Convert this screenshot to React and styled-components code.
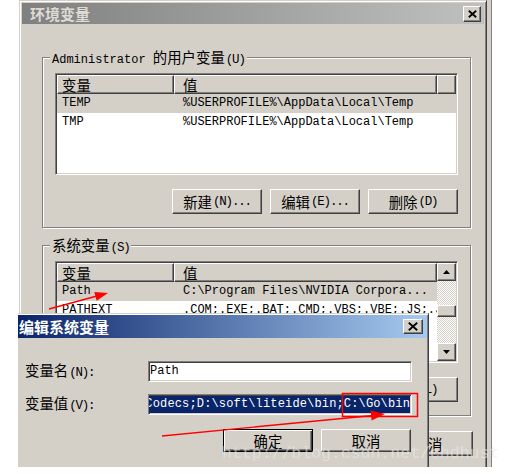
import React from 'react';
import styled, { createGlobalStyle, css } from 'styled-components';

const FACE = '#d4d0c8';
const SHADOW = '#808080';
const DARK = '#404040';

const Global = createGlobalStyle`
  html, body { margin: 0; padding: 0; background: #fff; }
  body { font-family: "Liberation Mono", "Noto Sans CJK SC", monospace; font-size: 12px; color: #000; }
  * { box-sizing: border-box; }
`;

const Han = styled.span`
  font-family: "Noto Sans CJK SC", sans-serif;
  font-size: ${p => p.$size || 14.4}px;
`;
const Lat = styled.span`
  font-family: "Liberation Mono", monospace;
  font-size: 12px;
`;
const Mn = styled.span`
  font-family: "Liberation Mono", monospace;
  font-size: 12.5px;
  letter-spacing: -1.2px;
  margin-left: 1px;
`;

const raised = css`
  background: ${FACE};
  border: 1px solid;
  border-color: #fff ${DARK} ${DARK} #fff;
  box-shadow: inset -1px -1px ${SHADOW}, inset 1px 1px ${FACE};
`;
const sunken = css`
  border: 1px solid;
  border-color: ${SHADOW} #fff #fff ${SHADOW};
  box-shadow: inset 1px 1px ${DARK}, inset -1px -1px ${FACE};
`;

const Desktop = styled.div`
  position: relative;
  width: 512px;
  height: 474px;
  overflow: hidden;
  background: #fff;
`;

const Crop = styled.div`
  position: absolute;
  left: 18px;
  top: 0;
  width: 494px;
  height: 467px;
  overflow: hidden;
`;

const MainWindow = styled.div`
  position: absolute;
  left: 1px;
  top: 0;
  width: 468px;
  height: 490px;
  background: ${FACE};
  border: 1px solid;
  border-color: ${FACE} ${DARK} ${DARK} ${FACE};
  box-shadow: inset 1px 1px #fff, inset -1px -1px ${SHADOW}, 4px 0 0 ${FACE}, 5px 0 0 ${SHADOW};
  padding: 2px;
  display: flex;
  flex-direction: column;
`;

const EditWindow = styled.div`
  position: absolute;
  left: 0;
  top: 313px;
  width: 411px;
  height: 180px;
  background: ${FACE};
  border: 1px solid;
  border-left: none;
  border-color: ${FACE} ${DARK} ${DARK};
  box-shadow: inset 0 1px #fff, inset -1px -1px ${SHADOW};
  padding: 1px 1px 1px 0;
  display: flex;
  flex-direction: column;
`;

const TitleBar = styled.div`
  flex: none;
  height: ${p => p.$h}px;
  display: flex;
  align-items: center;
  justify-content: space-between;
  padding: 0 ${p => p.$pr}px 0 ${p => p.$pl}px;
  background: ${p => (p.$active
    ? 'linear-gradient(to right, #0a246a, #a6caf0)'
    : 'linear-gradient(to right, #808080, #c0c0c0)')};
  color: ${p => (p.$active ? '#fff' : '#dedad4')};
  font-family: "Noto Sans CJK SC", sans-serif;
  font-weight: bold;
  font-size: 15px;
  line-height: 1;
  white-space: nowrap;
`;

const CloseButton = styled.div`
  ${raised};
  width: ${p => p.$w}px;
  height: ${p => p.$h}px;
  display: flex;
  align-items: center;
  justify-content: center;
`;

const XGlyph = ({ w, h }) => (
  <svg width={w} height={h} viewBox={`0 0 ${w} ${h}`}>
    <path d={`M0.8 0.8 L${w - 0.8} ${h - 0.8} M${w - 0.8} 0.8 L0.8 ${h - 0.8}`} stroke="#000" strokeWidth="1.8" fill="none" />
  </svg>
);

const MainBody = styled.div`
  display: flex;
  flex-direction: column;
  padding: 25px 13px 0 20px;
`;

const Group = styled.fieldset`
  margin: 0;
  margin-top: ${p => p.$mt || 0}px;
  min-width: 0;
  border: 1px solid ${SHADOW};
  box-shadow: inset 1px 1px #fff, 1px 1px #fff;
  padding: 8px 12px 13px;
`;

const Legend = styled.legend`
  padding: 0 2px;
  margin-left: -5px;
  height: 16px;
  line-height: 16px;
  background: ${FACE};
  white-space: nowrap;
`;

const ListView = styled.div`
  height: 102px;
  ${sunken};
  background: #fff;
  padding: 1px;
  display: grid;
  grid-template-columns: ${p => (p.$scroll ? '1fr 19px' : '1fr')};
  overflow: hidden;
`;

const ListPane = styled.div`
  display: flex;
  flex-direction: column;
  min-width: 0;
  overflow: hidden;
`;

const Row = styled.div`
  flex: none;
  display: grid;
  grid-template-columns: 117px 263px 1fr;
  height: 19px;
  line-height: 19px;
  white-space: nowrap;
  background: ${p => (p.$selected ? FACE : 'transparent')};
`;

const HeaderCell = styled.div`
  ${raised};
  padding-left: ${p => p.$pl}px;
  line-height: 17px;
  overflow: hidden;
`;

const Cell = styled.div`
  padding-left: ${p => p.$pl}px;
  overflow: hidden;
  font-family: "Liberation Mono", monospace;
  font-size: 12px;
`;

const ScrollBar = styled.div`
  display: flex;
  flex-direction: column;
  background: repeating-conic-gradient(#fff 0 25%, ${FACE} 0 50%) 0 0 / 2px 2px;
`;

const ScrollBtn = styled.div`
  ${raised};
  flex: none;
  height: 18px;
  display: flex;
  align-items: center;
  justify-content: center;
  margin-top: ${p => (p.$bottom ? 'auto' : '0')};
`;

const Thumb = styled.div`
  ${raised};
  flex: none;
  height: 12px;
  margin-top: 24px;
`;

const Tri = ({ down }) => (
  <svg width="7" height="4" viewBox="0 0 7 4">
    <polygon points={down ? '0,0 7,0 3.5,4' : '0,4 7,4 3.5,0'} fill="#000" />
  </svg>
);

const ButtonRow = styled.div`
  display: flex;
  justify-content: flex-end;
  gap: 8px;
  margin-top: ${p => p.$mt}px;
  margin-right: ${p => p.$mr || 0}px;
`;

const Button = styled.div`
  ${raised};
  width: 90px;
  height: ${p => p.$h || 25}px;
  display: flex;
  align-items: center;
  justify-content: center;
  line-height: 16px;
  white-space: nowrap;
  ${p => p.$default && css`
    border-color: #000;
    box-shadow: inset 1px 1px #fff, inset -1px -1px ${DARK}, inset -2px -2px ${SHADOW};
  `}
`;

const EditBody = styled.div`
  display: flex;
  flex-direction: column;
  padding: 23px 15px 0 7px;
`;

const FieldGrid = styled.div`
  display: grid;
  grid-template-columns: 123px 264px;
  row-gap: 12px;
  align-items: center;
`;

const FieldLabel = styled.div`
  white-space: nowrap;
  line-height: 16px;
`;

const TextInput = styled.div`
  height: 21px;
  ${sunken};
  background: #fff;
  padding: 1px ${p => (p.$end ? 1 : 2)}px 1px 1px;
  display: flex;
  align-items: center;
  justify-content: ${p => (p.$end ? 'flex-end' : 'flex-start')};
  overflow: hidden;
  white-space: nowrap;
  font-family: "Liberation Mono", monospace;
  font-size: 12px;
  line-height: 15px;
`;

const Selection = styled.span`
  flex: none;
  background: #0a246a;
  color: #fff;
  padding: 1px 0;
  letter-spacing: 0.15px;
`;

const Overlay = styled.svg`
  position: absolute;
  left: 0;
  top: 0;
  pointer-events: none;
`;

const Watermark = styled.div`
  position: absolute;
  left: 222px;
  top: 444px;
  font-family: "Liberation Mono", monospace;
  font-size: 16.5px;
  color: rgba(238, 236, 232, 0.6);
  -webkit-text-stroke: 0.2px rgba(170, 170, 170, 0.25);
  white-space: nowrap;
  pointer-events: none;
`;

const listHeader = (
  <Row>
    <HeaderCell $pl={4}><Han>变量</Han></HeaderCell>
    <HeaderCell $pl={8}><Han>值</Han></HeaderCell>
    <HeaderCell $pl={0} />
  </Row>
);

const userVars = [
  ['TEMP', '%USERPROFILE%\\AppData\\Local\\Temp', true],
  ['TMP', '%USERPROFILE%\\AppData\\Local\\Temp', false],
];

const sysVars = [
  ['Path', 'C:\\Program Files\\NVIDIA Corpora...', true],
  ['PATHEXT', '.COM;.EXE;.BAT;.CMD;.VBS;.VBE;.JS;.JSE;.WSF;.WSH', false],
  ['PROCESSOR_ARCHITECTURE', 'AMD64', false],
  ['PROCESSOR_IDENTIFIER', 'Intel64 Family 6 Model 58', false],
];

const VarRows = ({ rows }) =>
  rows.map(([k, v, sel]) => (
    <Row key={k} $selected={sel}>
      <Cell $pl={5}>{k}</Cell>
      <Cell $pl={9}>{v}</Cell>
      <Cell $pl={0} />
    </Row>
  ));

export default function App() {
  return (
    <>
      <Global />
      <Desktop>
        <Crop>
          <MainWindow>
            <TitleBar $h={21} $pl={8} $pr={3}>
              <span>环境变量</span>
              <CloseButton $w={18} $h={16}><XGlyph w={9} h={8} /></CloseButton>
            </TitleBar>
            <MainBody>
              <Group>
                <Legend><Lat>Administrator </Lat><Han>的用户变量</Han><Mn>(U)</Mn></Legend>
                <ListView>
                  <ListPane>
                    {listHeader}
                    <VarRows rows={userVars} />
                  </ListPane>
                </ListView>
                <ButtonRow $mt={14}>
                  <Button><Han>新建</Han><Mn>(N)...</Mn></Button>
                  <Button><Han>编辑</Han><Mn>(E)...</Mn></Button>
                  <Button><Han>删除</Han><Mn>(D)</Mn></Button>
                </ButtonRow>
              </Group>
              <Group $mt={9}>
                <Legend><Han>系统变量</Han><Mn>(S)</Mn></Legend>
                <ListView $scroll>
                  <ListPane>
                    {listHeader}
                    <VarRows rows={sysVars} />
                  </ListPane>
                  <ScrollBar>
                    <ScrollBtn><Tri /></ScrollBtn>
                    <Thumb />
                    <ScrollBtn $bottom><Tri down /></ScrollBtn>
                  </ScrollBar>
                </ListView>
                <ButtonRow $mt={14}>
                  <Button><Han>新建</Han><Mn>(W)...</Mn></Button>
                  <Button><Han>编辑</Han><Mn>(I)...</Mn></Button>
                  <Button><Han>删除</Han><Mn>(L)</Mn></Button>
                </ButtonRow>
              </Group>
              <ButtonRow $mt={15} $mr={-2}>
                <Button $default><Han>确定</Han></Button>
                <Button><Han>取消</Han></Button>
              </ButtonRow>
            </MainBody>
          </MainWindow>

          <EditWindow>
            <TitleBar $active $h={23} $pl={1} $pr={4}>
              <span>编辑系统变量</span>
              <CloseButton $w={20} $h={15}><XGlyph w={10} h={9} /></CloseButton>
            </TitleBar>
            <EditBody>
              <FieldGrid>
                <FieldLabel><Han>变量名</Han><Mn>(N):</Mn></FieldLabel>
                <TextInput>Path</TextInput>
                <FieldLabel><Han>变量值</Han><Mn>(V):</Mn></FieldLabel>
                <TextInput $end>
                  <Selection>%SystemRoot%\system32;%SystemRoot%;C:\Program Files\Codecs;D:\soft\liteide\bin;C:\Go\bin</Selection>
                </TextInput>
              </FieldGrid>
              <ButtonRow $mt={14} $mr={1}>
                <Button $default $h={23}><Han>确定</Han></Button>
                <Button $h={23}><Han>取消</Han></Button>
              </ButtonRow>
            </EditBody>
          </EditWindow>
        </Crop>

        <Watermark>http://blog.csdn.net/chdhust</Watermark>

        <Overlay width="512" height="474" viewBox="0 0 512 474">
          <rect x="342.5" y="393.5" width="75" height="23" fill="none" stroke="#ff0000" strokeWidth="1.5" />
          <line x1="162" y1="436" x2="373" y2="415.5" stroke="#ff0000" strokeWidth="1.4" />
          <polygon points="385,414 370.6,410.4 371.6,420.4" fill="#ff0000" />
          <line x1="49" y1="309" x2="97" y2="296" stroke="#ff0000" strokeWidth="1.4" />
          <polygon points="108,293 94.3,292.1 96.7,300.7" fill="#ff0000" />
        </Overlay>
      </Desktop>
    </>
  );
}
